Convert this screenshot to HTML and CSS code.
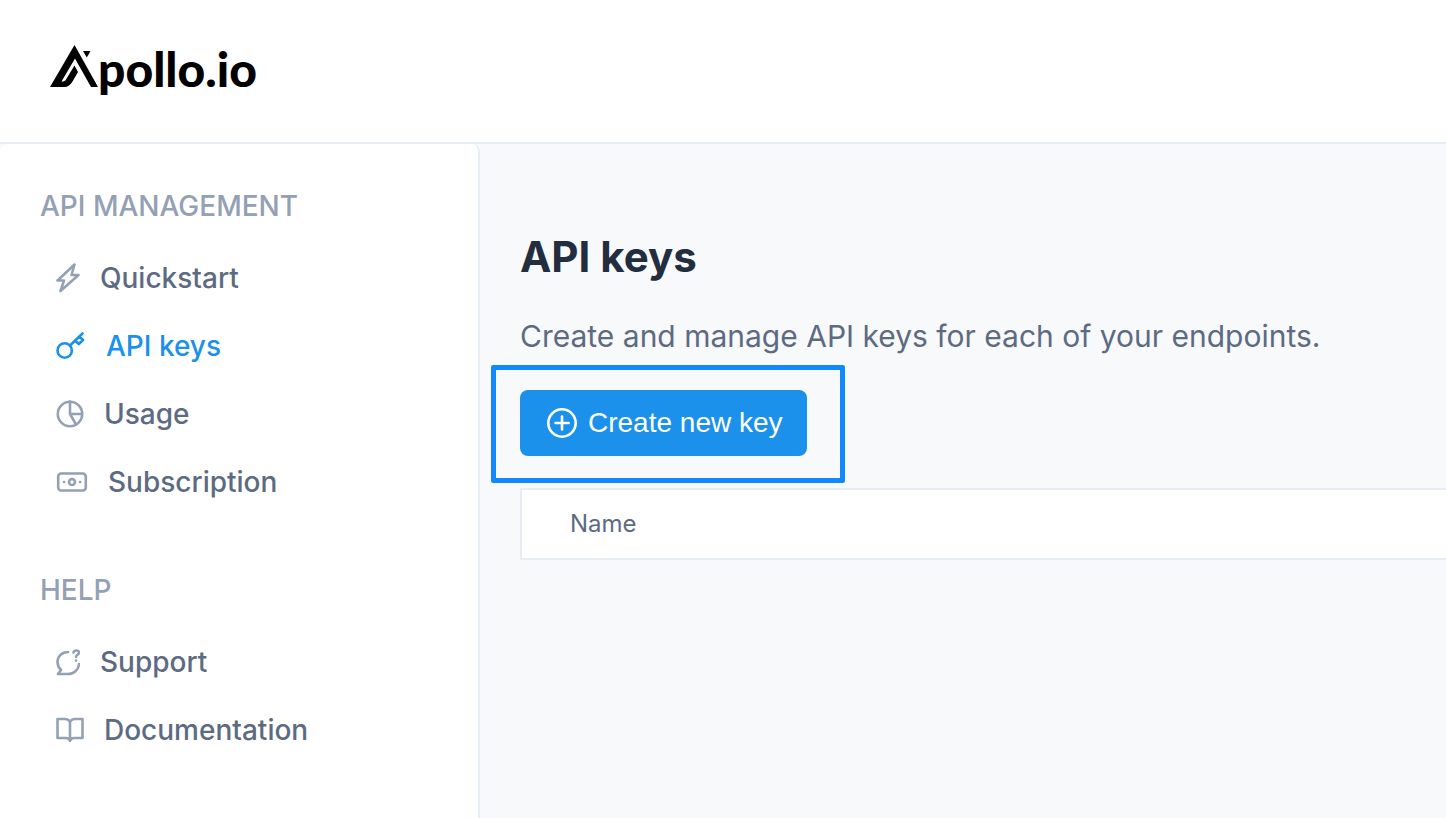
FILE: index.html
```html
<!DOCTYPE html>
<html lang="en">
<head>
  <meta charset="UTF-8" />
  <meta name="viewport" content="width=device-width, initial-scale=1.0" />
  <title>API keys - Apollo.io</title>
  <link rel="stylesheet" href="styles.css">
</head>
<body>

  <header class="topbar">
    <a class="logo" href="#" aria-label="Apollo.io">
      <svg class="logo-mark" width="48" height="42" viewBox="0 0 48 42" aria-hidden="true">
        <path d="M24.500 0 L0 42 H14 C18 42 20.500 40 22.500 36.500 L28 27 L24.500 20.500 L16 34.500 C15.200 36 14 36.500 11.500 36.500 L25 13.500 L41 42 H48 Z" />
        <path d="M33 6 H40.500 L36.800 12.500 Z" />
      </svg>
      <span class="logo-text">pollo.io</span>
    </a>
  </header>

  <div class="layout">
    <!-- Sidebar -->
    <nav class="sidebar">
      <h2>API MANAGEMENT</h2>
      <ul>
        <li><a href="#">
          <svg width="24" height="30" viewBox="0 0 24 30"><path d="M18.500 1.500 L1.500 17.500 H8 L4.500 28 L22.500 12 H15.500 Z" /></svg>
          Quickstart
        </a></li>
        <li><a href="#" class="active">
          <svg width="30" height="30" viewBox="0 0 30 30"><circle cx="8.700" cy="19.500" r="7.200" /><path d="M14 14.500 L26.500 2.500 M19 9.500 L22.800 13 L27 9 L23.300 5.500" /></svg>
          API keys
        </a></li>
        <li><a href="#">
          <svg width="28" height="28" viewBox="0 0 28 28"><circle cx="14" cy="14" r="12.200" /><path d="M14 1.500 V14 H26 M14 14 L20 24.500" /></svg>
          Usage
        </a></li>
        <li><a href="#">
          <svg width="32" height="20" viewBox="0 0 32 20"><rect x="2.200" y="1.500" width="27.600" height="17" rx="3" /><circle cx="16" cy="10" r="3" /><path d="M8 10 h.1 M24 10 h.1" /></svg>
          Subscription
        </a></li>
      </ul>

      <h2>HELP</h2>
      <ul>
        <li><a href="#">
          <svg width="24" height="28" viewBox="0 0 24 28"><path d="M12 4 C6 4 1.500 8.500 1.500 14 C1.500 17.500 3 20 5 22 L2 26 H12 C18 26 22.500 22 23 16" /><path d="M17.500 4.500 C18 2 22.800 1.500 23 4.500 C23 7 20 6.500 20 9 M20 12.500 v.1" /></svg>
          Support
        </a></li>
        <li><a href="#">
          <svg width="28" height="28" viewBox="0 0 28 28"><path d="M14 6 C13 4 11.500 3 9 3 H1.500 V22 H10 C12 22 13.500 23 14 25 C14.500 23 16 22 18 22 H26.500 V3 H19 C16.500 3 15 4 14 6 Z V25" /></svg>
          Documentation
        </a></li>
      </ul>
    </nav>

    <!-- Main content -->
    <main class="content">
      <h1>API keys</h1>
      <p>Create and manage API keys for each of your endpoints.</p>

      <div class="create">
        <button type="button">
          <svg width="32" height="32" viewBox="0 0 32 32" aria-hidden="true"><circle cx="16" cy="16" r="13.700" /><path d="M16 9.500 V22.500 M9.500 16 H22.500" /></svg>
          Create new key
        </button>
      </div>

      <table>
        <thead>
          <tr><th scope="col">Name</th></tr>
        </thead>
      </table>
    </main>
  </div>

</body>
</html>
```

FILE: styles.css
```css
* {
  box-sizing: border-box;
}

body {
  font-family: Inter, "Liberation Sans", sans-serif;
  margin: 0;
  min-height: 100vh;
  display: flex;
  flex-direction: column;
  background-color: #f8f9fb;
  color: #5d6b82;
  overflow-x: hidden;
}

.topbar {
  height: 144px;
  padding: 0 50px;
  display: flex;
  align-items: center;
  background-color: #fff;
  border-bottom: 2px solid #e8ecf3;
}

.logo {
  display: flex;
  align-items: flex-end;
  height: 54px;
  color: #000;
  text-decoration: none;
}

.logo-mark {
  margin-bottom: 11px;
}

.logo-text {
  font-family: Lato, Inter, sans-serif;
  font-size: 48px;
  line-height: 58px;
  font-weight: 900;
}

.layout {
  flex: 1;
  display: flex;
}

.sidebar {
  width: 480px;
  flex-shrink: 0;
  padding: 40px;
  background-color: #fff;
  border-right: 2px solid #e8ecf3;
  border-radius: 8px 8px 0 0;
}

.sidebar h2 {
  margin: 0 0 26px;
  font-size: 28px;
  line-height: 44px;
  font-weight: 500;
  color: #94a0b4;
}

.sidebar ul {
  list-style: none;
  margin: 0 0 62px;
  padding: 0;
  display: grid;
  gap: 20px;
}

.sidebar ul:last-child {
  margin-bottom: 0;
}

.sidebar li a {
  display: flex;
  align-items: center;
  gap: 20px;
  padding-left: 16px;
  font-size: 28px;
  line-height: 48px;
  font-weight: 500;
  color: #5d6b82;
  text-decoration: none;
}

.sidebar li a.active {
  color: #1b91eb;
}

svg {
  flex-shrink: 0;
}

.sidebar svg {
  fill: none;
  stroke: #94a0b4;
  stroke-width: 2.6;
  stroke-linecap: round;
  stroke-linejoin: round;
}

.sidebar .active svg {
  stroke: #1b91eb;
}

.content {
  flex: 1;
  min-width: 0;
  padding: 83px 0 40px 40px;
}

h1 {
  margin: 0 0 27px;
  font-size: 42px;
  line-height: 60px;
  font-weight: 700;
  color: #232d40;
}

.content p {
  margin: 0 0 32px;
  font-size: 30px;
  line-height: 44px;
}

.create {
  position: relative;
  width: fit-content;
  margin-bottom: 32px;
}

/* Frame drawn around the button */
.create::after {
  content: "";
  position: absolute;
  inset: -25px -38px -27px -29px;
  border: 5px solid #1188ff;
  border-radius: 2px;
  pointer-events: none;
}

button {
  display: flex;
  align-items: center;
  gap: 10px;
  height: 66px;
  padding: 0 24px 0 26px;
  border: none;
  border-radius: 8px;
  background-color: #1b91eb;
  color: #fff;
  font-family: "Liberation Sans", Arial, sans-serif;
  font-size: 28px;
  cursor: pointer;
}

button svg {
  fill: none;
  stroke: #fff;
  stroke-width: 2.6;
  stroke-linecap: round;
}

table {
  width: calc(100% + 40px);
  border-spacing: 0;
  border: 2px solid #e8ecf3;
  background-color: #fff;
}

th {
  height: 68px;
  padding: 0 48px 2px;
  text-align: left;
  font-size: 24px;
  font-weight: 400;
}
```
